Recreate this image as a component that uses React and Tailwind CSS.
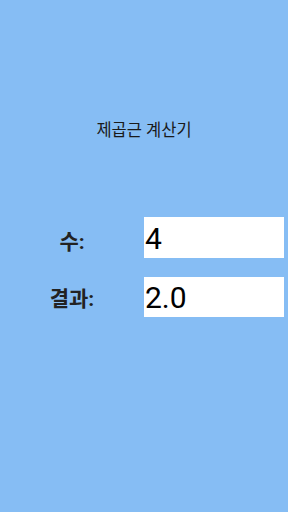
export default function App() {
  return (
    <div className="w-[288px] h-[512px] bg-[#86bdf4] flex flex-col" style={{ fontFamily: 'Roboto, "Noto Sans CJK KR", sans-serif' }}>
      <div className="pt-[118px] h-[217px] text-center text-[16.5px] text-[#1a1a1a] leading-[26px]">제곱근 계산기</div>
      <div className="flex flex-col gap-[19px]">
        <div className="flex items-center h-[41px]">
          <div className="w-[144px] text-center text-[21px] font-bold text-[#222] pt-[10px]">수:</div>
          <div className="w-[140px] h-[41px] bg-white flex items-center pl-[1px] pt-[3px] text-[30px] text-black leading-none">4</div>
        </div>
        <div className="flex items-center h-[40px]">
          <div className="w-[144px] text-center text-[21px] font-bold text-[#222] pt-[6px]">결과:</div>
          <div className="w-[140px] h-[40px] bg-white flex items-center pl-[1px] pt-[1px] text-[30px] text-black leading-none">2.0</div>
        </div>
      </div>
    </div>
  );
}
